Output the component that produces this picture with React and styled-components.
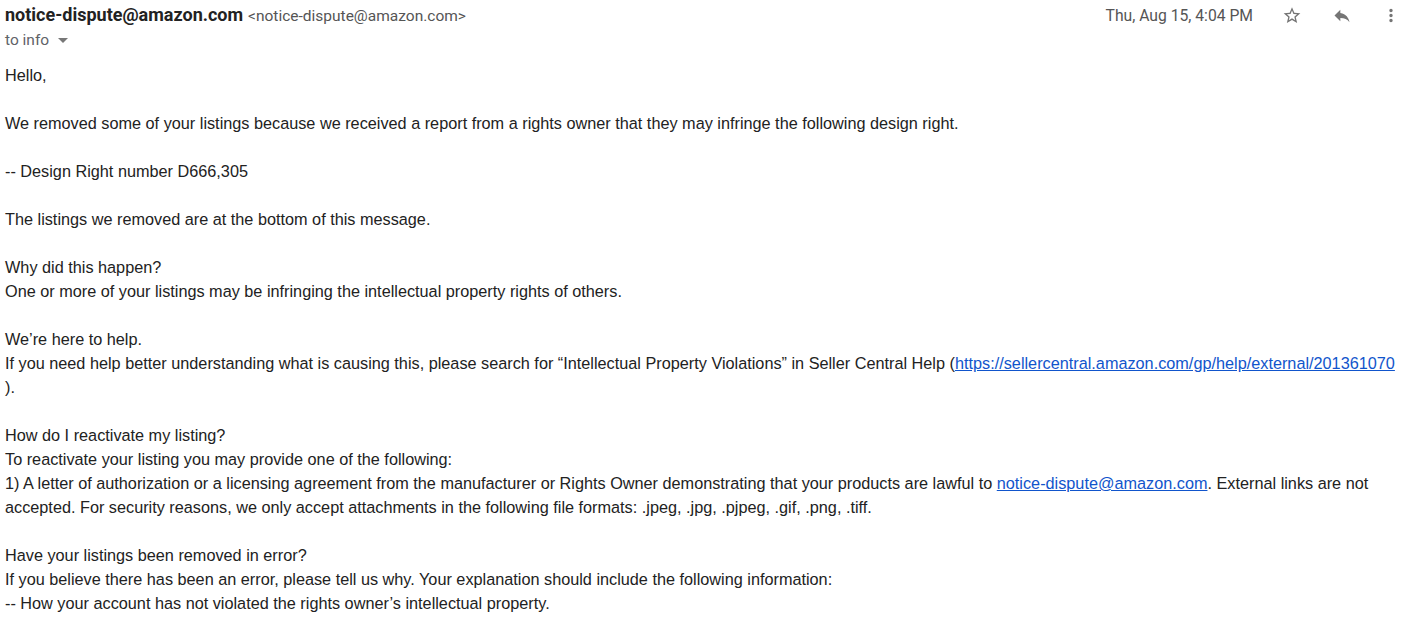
import React from "react";
import styled, { createGlobalStyle } from "styled-components";

const Global = createGlobalStyle`
  html, body { margin: 0; padding: 0; background: #fff; }
  body { font-family: "Liberation Sans", Arial, sans-serif; }
`;

const Page = styled.div`
  padding: 0 3px 0 5px;
  width: 1404px;
  box-sizing: border-box;
`;

const Header = styled.div`
  display: flex;
  align-items: flex-start;
  justify-content: space-between;
  height: 63px;
`;

const SenderBlock = styled.div`
  display: flex;
  flex-direction: column;
  padding-top: 4px;
`;

const SenderLine = styled.div`
  display: flex;
  align-items: baseline;
  gap: 5px;
`;

const SenderName = styled.span`
  font-family: Roboto, "Liberation Sans", sans-serif;
  font-weight: 700;
  font-size: 18px;
  color: #222;
`;

const SenderAddr = styled.span`
  font-family: Roboto, "Liberation Sans", sans-serif;
  font-size: 15.5px;
  color: #555;
`;

const ToLine = styled.div`
  display: flex;
  align-items: center;
  gap: 7px;
  margin-top: 6px;
  font-family: Roboto, "Liberation Sans", sans-serif;
  font-size: 15.5px;
  color: #5f6368;
`;

const Caret = styled.span`
  width: 0;
  height: 0;
  border-left: 5px solid transparent;
  border-right: 5px solid transparent;
  border-top: 5px solid #777;
  margin-left: 2px;
`;

const Actions = styled.div`
  display: flex;
  align-items: center;
  padding-top: 5px;
`;

const DateText = styled.span`
  font-family: Roboto, "Liberation Sans", sans-serif;
  font-size: 15.7px;
  color: #555;
  margin-right: 29px;
`;

const IconButton = styled.span`
  display: flex;
  align-items: center;
  justify-content: center;
  width: 20px;
  height: 20px;
  margin-left: ${(p) => p.$gap}px;
  svg { width: ${(p) => p.$size}px; height: ${(p) => p.$size}px; fill: #757575; }
`;

const Body = styled.div`
  font-family: "Liberation Sans", Arial, sans-serif;
  font-size: 16.25px;
  line-height: 24px;
  color: #222;
`;

const Para = styled.p`
  margin: 0 0 24px 0;
`;

const Link = styled.a`
  color: #1155cc;
  text-decoration: underline;
`;

export default function App() {
  return (
    <Page>
      <Global />
      <Header>
        <SenderBlock>
          <SenderLine>
            <SenderName>notice-dispute@amazon.com</SenderName>
            <SenderAddr>&lt;notice-dispute@amazon.com&gt;</SenderAddr>
          </SenderLine>
          <ToLine>
            to info <Caret />
          </ToLine>
        </SenderBlock>
        <Actions>
          <DateText>Thu, Aug 15, 4:04 PM</DateText>
          <IconButton $gap={0} $size={25}>
            <svg viewBox="0 0 24 24">
              <path d="M22 9.24l-7.19-.62L12 2 9.19 8.63 2 9.24l5.46 4.73L5.82 21 12 17.27 18.18 21l-1.63-7.03L22 9.24zM12 15.4l-3.76 2.27 1-4.28-3.32-2.88 4.38-.38L12 6.1l1.71 4.04 4.38.38-3.32 2.88 1 4.28L12 15.4z" />
            </svg>
          </IconButton>
          <IconButton $gap={30} $size={25}>
            <svg viewBox="0 0 24 24">
              <path d="M10 9V5l-7 7 7 7v-4.1c5 0 8.5 1.6 11 5.1-1-5-4-10-11-11z" />
            </svg>
          </IconButton>
          <IconButton $gap={29} $size={25}>
            <svg viewBox="0 0 24 24">
              <path d="M12 8c1.1 0 2-.9 2-2s-.9-2-2-2-2 .9-2 2 .9 2 2 2zm0 2c-1.1 0-2 .9-2 2s.9 2 2 2 2-.9 2-2-.9-2-2-2zm0 6c-1.1 0-2 .9-2 2s.9 2 2 2 2-.9 2-2-.9-2-2-2z" />
            </svg>
          </IconButton>
        </Actions>
      </Header>
      <Body>
        <Para>Hello,</Para>
        <Para>
          We removed some of your listings because we received a report from a rights owner that they may infringe the following design right.
        </Para>
        <Para>-- Design Right number D666,305</Para>
        <Para>The listings we removed are at the bottom of this message.</Para>
        <Para>
          Why did this happen?
          <br />
          One or more of your listings may be infringing the intellectual property rights of others.
        </Para>
        <Para>
          We’re here to help.
          <br />
          If you need help better understanding what is causing this, please search for “Intellectual Property Violations” in Seller Central Help (
          <Link href="#">https://sellercentral.amazon.com/gp/help/external/201361070</Link>
          <br />
          ).
        </Para>
        <Para>
          How do I reactivate my listing?
          <br />
          To reactivate your listing you may provide one of the following:
          <br />
          1) A letter of authorization or a licensing agreement from the manufacturer or Rights Owner demonstrating that your products are lawful to{" "}
          <Link href="#">notice-dispute@amazon.com</Link>. External links are not accepted. For security reasons, we only accept attachments in the following file formats: .jpeg, .jpg, .pjpeg, .gif, .png, .tiff.
        </Para>
        <Para>
          Have your listings been removed in error?
          <br />
          If you believe there has been an error, please tell us why. Your explanation should include the following information:
          <br />
          -- How your account has not violated the rights owner’s intellectual property.
        </Para>
      </Body>
    </Page>
  );
}
